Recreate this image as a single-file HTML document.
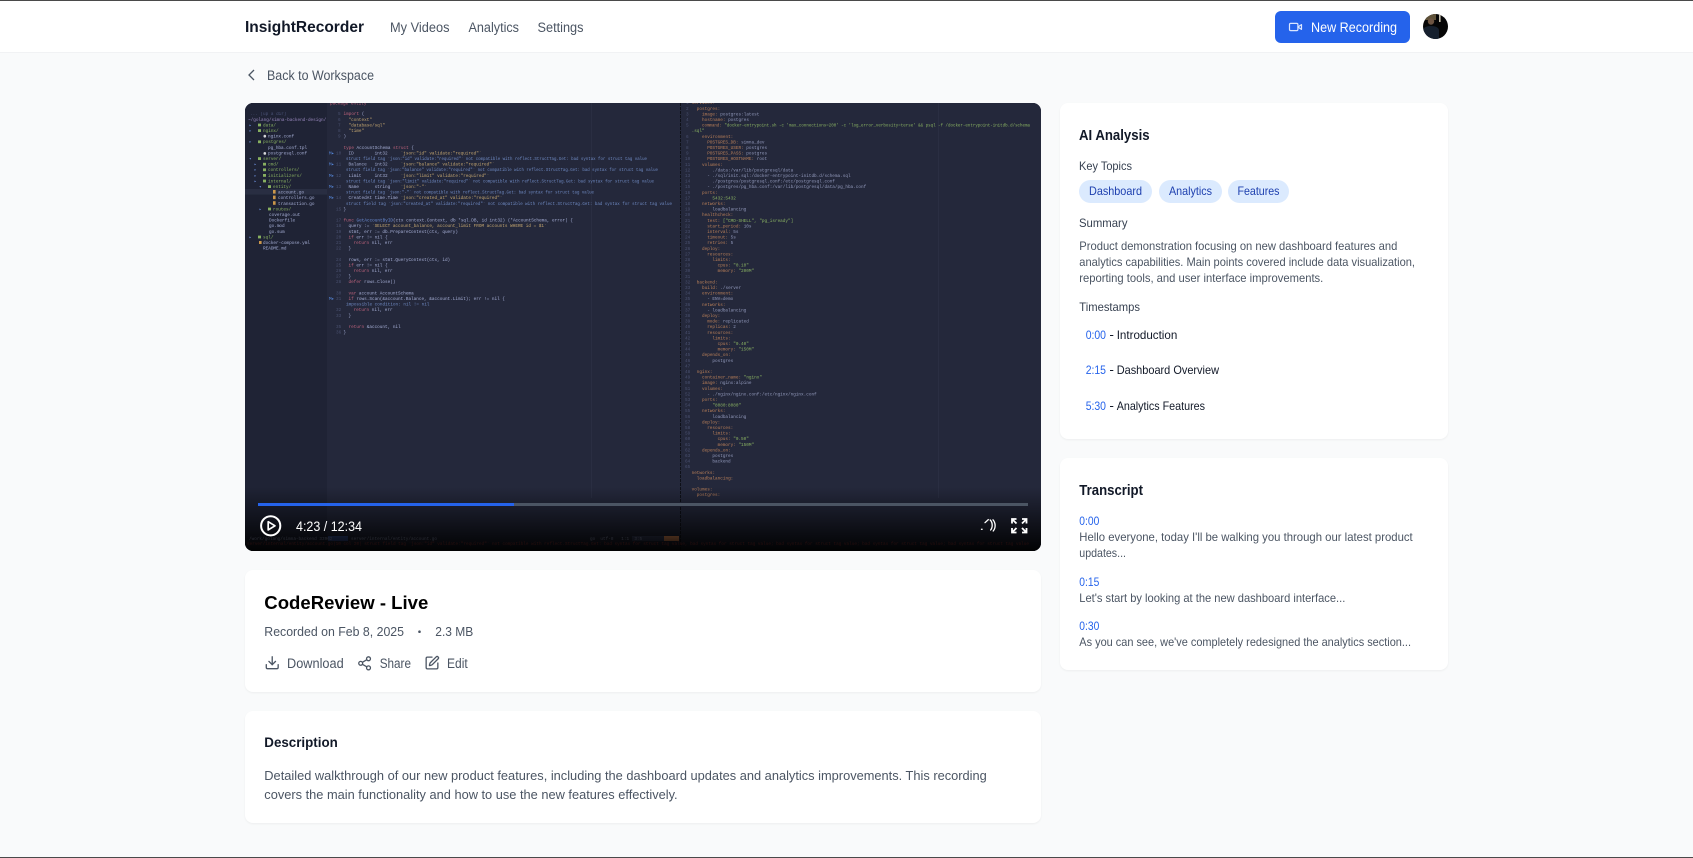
<!DOCTYPE html>
<html lang="en"><head><meta charset="utf-8"><title>CodeReview - Live</title>
<style>
html,body{margin:0;padding:0;width:1693px;height:858px;overflow:hidden;background:#f9fafb;font-family:"Liberation Sans",Arial,sans-serif}
.abs{position:absolute}
.nav{left:0;top:0;width:1693px;background:#fff;border-top:1px solid #4a4a4a;border-bottom:1px solid #f1f2f4;box-sizing:border-box;height:53px}
.bot{left:0;top:857px;width:1693px;height:1px;background:#4a4a4a}
.btn{left:1275px;top:11px;width:135px;height:32px;border-radius:6px;background:#2563eb}
.card{background:#fff;border-radius:8px;box-shadow:0 1px 2px rgba(0,0,0,.05)}
.video{left:245px;top:103px;width:796px;height:448px;border-radius:8px;overflow:hidden;background:#24283b}
.pill{top:180px;height:23px;border-radius:12px;background:#dbeafe}
svg{position:absolute;left:0;top:0;display:block}
.t text{font-family:"Liberation Sans",Arial,sans-serif}
.g{fill:#4b5563}.d{fill:#111827}.b{fill:#2563eb}.l{fill:#1e40af}.w{fill:#fff}
.code text{font-family:"Liberation Mono",monospace;font-size:4.35px;white-space:pre}
.ln{fill:#4a5170}.k{fill:#e0708a}.s{fill:#e5c07b}.f{fill:#c0caf5}.e{fill:#7f9fe0}.y{fill:#d9925f}.v{fill:#a9b1d6}.q{fill:#9ece6a}.tg{fill:#9ece6a}.fn{fill:#7aa2f7}
.dim{opacity:.82}
</style></head>
<body>
<div class="abs nav"></div>
<div class="abs bot"></div>
<div class="abs btn"></div>
<div class="abs video">
<svg width="796" height="448" viewBox="245 103 796 448" class="code">
<rect x="245" y="103" width="796" height="448" fill="#24283b"/>
<rect x="245" y="103" width="82" height="448" fill="#1f2335"/>
<rect x="245" y="189" width="82" height="5.6" fill="#292e42"/>
<rect x="591" y="103" width="1" height="395" fill="#2a2e42"/>
<rect x="938" y="103" width="1" height="395" fill="#2a2e42"/>
<line x1="680.5" y1="103" x2="680.5" y2="551" stroke="#0e1018" stroke-width="1" stroke-dasharray="3 1"/>
<!-- tree -->
<g class="dim">
<text x="250" y="115" fill="#565f89">... (up a dir)</text>
<text x="248" y="120.8" fill="#b39ddb">~/golang/simna-backend-design/</text>
<g fill="#9ece6a"><rect x="258" y="123.6" width="3" height="2.8"/><rect x="258" y="129.2" width="3" height="2.8"/><rect x="258" y="140.4" width="3" height="2.8"/><rect x="258" y="157.2" width="3" height="2.8"/><rect x="263" y="162.8" width="3" height="2.8"/><rect x="263" y="168.4" width="3" height="2.8"/><rect x="263" y="174" width="3" height="2.8"/><rect x="263" y="179.6" width="3" height="2.8"/><rect x="268" y="185.2" width="3" height="2.8"/><rect x="268" y="207.6" width="3" height="2.8"/><rect x="258" y="235.6" width="3" height="2.8"/></g>
<g fill="#7aa2f7"><text x="249" y="126.4">▸</text><text x="249" y="132">▸</text><text x="249" y="143.2">▸</text><text x="249" y="160">▾</text><text x="254" y="165.6">▸</text><text x="254" y="171.2">▸</text><text x="254" y="176.8">▸</text><text x="254" y="182.4">▸</text><text x="259" y="188">▾</text><text x="259" y="210.4">▸</text><text x="249" y="238.4">▸</text></g>
<g fill="#fff"><rect x="263.5" y="134.8" width="2.6" height="2.8" rx="1.3"/><rect x="263.5" y="152" width="2.6" height="2.8" rx="1.3"/></g>
<g fill="#f0b04f"><rect x="273" y="190" width="2.6" height="3.6"/><rect x="273" y="195.6" width="2.6" height="3.6"/><rect x="273" y="201.2" width="2.6" height="3.6"/><rect x="259" y="241" width="2.6" height="3"/></g>
<g fill="#9ece6a"><text x="263" y="126.4">data/</text><text x="263" y="132">nginx/</text><text x="263" y="143.2">postgres/</text><text x="263" y="160">server/</text><text x="268" y="165.6">cmd/</text><text x="268" y="171.2">controllers/</text><text x="268" y="176.8">initializers/</text><text x="268" y="182.4">internal/</text><text x="273" y="188">entity/</text><text x="273" y="210.4">routes/</text><text x="263" y="238.4">sql/</text></g>
<g fill="#c0caf5"><text x="268" y="137.6">nginx.conf</text><text x="268" y="148.8">pg_hba.conf.tpl</text><text x="268" y="154.4">postgresql.conf</text><text x="278" y="193.6">account.go</text><text x="278" y="199.2">controllers.go</text><text x="278" y="204.8">transaction.go</text><text x="269" y="216">coverage.out</text><text x="269" y="221.6">Dockerfile</text><text x="269" y="227.2">go.mod</text><text x="269" y="232.8">go.sum</text><text x="263" y="244">docker-compose.yml</text><text x="263" y="249.6">README.md</text></g>
</g>
<!-- go code -->
<g class="ln"><text x="338" y="115.2">5</text><text x="338" y="120.8">6</text><text x="338" y="126.4">7</text><text x="338" y="132">8</text><text x="338" y="137.6">9</text><text x="336" y="154.4">10</text><text x="336" y="165.6">11</text><text x="336" y="176.8">12</text><text x="336" y="188">13</text><text x="336" y="199.2">14</text><text x="336" y="210.4">15</text><text x="336" y="221.6">17</text><text x="336" y="227.2">18</text><text x="336" y="232.8">19</text><text x="336" y="238.4">20</text><text x="336" y="244">21</text><text x="336" y="249.6">22</text><text x="336" y="260.8">24</text><text x="336" y="266.4">25</text><text x="336" y="272">26</text><text x="336" y="277.6">27</text><text x="336" y="283.2">28</text><text x="336" y="294.4">30</text><text x="336" y="300">31</text><text x="336" y="311.2">32</text><text x="336" y="316.8">33</text><text x="336" y="328">35</text><text x="336" y="333.6">36</text></g>
<g fill="#5a8fe6"><text x="329" y="154.4">M▸</text><text x="329" y="165.6">M▸</text><text x="329" y="176.8">M▸</text><text x="329" y="188">M▸</text><text x="329" y="199.2">M▸</text><text x="329" y="300">M▸</text></g>
<g class="f dim">
<text x="330" y="104.5" class="k">package entity</text>
<text x="343.5" y="115.2"><tspan class="k">import</tspan> (</text>
<text x="348.5" y="120.8" class="s">"context"</text>
<text x="348.5" y="126.4" class="s">"database/sql"</text>
<text x="348.5" y="132" class="s">"time"</text>
<text x="343.5" y="137.6">)</text>
<text x="343.5" y="148.8"><tspan class="k">type</tspan> AccountSchema <tspan class="k">struct</tspan> {</text>
<text x="348.5" y="154.4">ID        int32     <tspan class="s">`json:"id" validate:"required"`</tspan></text>
<text x="346" y="160" class="e" textLength="301" lengthAdjust="spacingAndGlyphs">struct field tag `json:"id" validate:"required"` not compatible with reflect.StructTag.Get: bad syntax for struct tag value</text>
<text x="348.5" y="165.6">Balance   int32     <tspan class="s">`json:"balance" validate:"required"`</tspan></text>
<text x="346" y="171.2" class="e" textLength="312" lengthAdjust="spacingAndGlyphs">struct field tag `json:"balance" validate:"required"` not compatible with reflect.StructTag.Get: bad syntax for struct tag value</text>
<text x="348.5" y="176.8">Limit     int32     <tspan class="s">`json:"limit" validate:"required"`</tspan></text>
<text x="346" y="182.4" class="e" textLength="308" lengthAdjust="spacingAndGlyphs">struct field tag `json:"limit" validate:"required"` not compatible with reflect.StructTag.Get: bad syntax for struct tag value</text>
<text x="348.5" y="188">Name      string    <tspan class="s">`json:"-"`</tspan></text>
<text x="346" y="193.6" class="e" textLength="248" lengthAdjust="spacingAndGlyphs">struct field tag `json:"-"` not compatible with reflect.StructTag.Get: bad syntax for struct tag value</text>
<text x="348.5" y="199.2">CreatedAt time.Time <tspan class="s">`json:"created_at" validate:"required"`</tspan></text>
<text x="346" y="204.8" class="e" textLength="326" lengthAdjust="spacingAndGlyphs">struct field tag `json:"created_at" validate:"required"` not compatible with reflect.StructTag.Get: bad syntax for struct tag value</text>
<text x="343.5" y="210.4">}</text>
<text x="343.5" y="221.6"><tspan class="k">func</tspan> <tspan class="fn">GetAccountByID</tspan>(ctx context.Context, db *sql.DB, id int32) (*AccountSchema, error) {</text>
<text x="348.5" y="227.2">query := <tspan class="s">`SELECT account_balance, account_limit FROM accounts WHERE id = $1`</tspan></text>
<text x="348.5" y="232.8">stmt, err := db.PrepareContext(ctx, query)</text>
<text x="348.5" y="238.4"><tspan class="k">if</tspan> err != nil {</text>
<text x="353.5" y="244"><tspan class="k">return</tspan> nil, err</text>
<text x="348.5" y="249.6">}</text>
<text x="348.5" y="260.8">rows, err := stmt.QueryContext(ctx, id)</text>
<text x="348.5" y="266.4"><tspan class="k">if</tspan> err != nil {</text>
<text x="353.5" y="272"><tspan class="k">return</tspan> nil, err</text>
<text x="348.5" y="277.6">}</text>
<text x="348.5" y="283.2"><tspan class="k">defer</tspan> rows.Close()</text>
<text x="348.5" y="294.4"><tspan class="k">var</tspan> account AccountSchema</text>
<text x="348.5" y="300"><tspan class="k">if</tspan> rows.Scan(&amp;account.Balance, &amp;account.Limit); err != nil {</text>
<text x="346" y="305.6" class="e">impossible condition: nil != nil</text>
<text x="353.5" y="311.2"><tspan class="k">return</tspan> nil, err</text>
<text x="348.5" y="316.8">}</text>
<text x="348.5" y="328"><tspan class="k">return</tspan> &amp;account, nil</text>
<text x="343.5" y="333.6">}</text>
</g>
<!-- right numbers -->
<text class="ln" x="686" y="104.2">1<tspan x="686" dy="5.6">2</tspan><tspan x="686" dy="5.6">3</tspan><tspan x="686" dy="5.6">4</tspan><tspan x="686" dy="5.6">5</tspan><tspan x="686" dy="11.2">6</tspan><tspan x="686" dy="5.6">7</tspan><tspan x="686" dy="5.6">8</tspan><tspan x="686" dy="5.6">9</tspan><tspan x="685" dy="5.6">10</tspan><tspan x="685" dy="5.6">11</tspan><tspan x="685" dy="5.6">12</tspan><tspan x="685" dy="5.6">13</tspan><tspan x="685" dy="5.6">14</tspan><tspan x="685" dy="5.6">15</tspan><tspan x="685" dy="5.6">16</tspan><tspan x="685" dy="5.6">17</tspan><tspan x="685" dy="5.6">18</tspan><tspan x="685" dy="5.6">19</tspan><tspan x="685" dy="5.6">20</tspan><tspan x="685" dy="5.6">21</tspan><tspan x="685" dy="5.6">22</tspan><tspan x="685" dy="5.6">23</tspan><tspan x="685" dy="5.6">24</tspan><tspan x="685" dy="5.6">25</tspan><tspan x="685" dy="5.6">26</tspan><tspan x="685" dy="5.6">27</tspan><tspan x="685" dy="5.6">28</tspan><tspan x="685" dy="5.6">29</tspan><tspan x="685" dy="5.6">30</tspan><tspan x="685" dy="5.6">31</tspan><tspan x="685" dy="5.6">32</tspan><tspan x="685" dy="5.6">33</tspan><tspan x="685" dy="5.6">34</tspan><tspan x="685" dy="5.6">35</tspan><tspan x="685" dy="5.6">36</tspan><tspan x="685" dy="5.6">37</tspan><tspan x="685" dy="5.6">38</tspan><tspan x="685" dy="5.6">39</tspan><tspan x="685" dy="5.6">40</tspan><tspan x="685" dy="5.6">41</tspan><tspan x="685" dy="5.6">42</tspan><tspan x="685" dy="5.6">43</tspan><tspan x="685" dy="5.6">44</tspan><tspan x="685" dy="5.6">45</tspan><tspan x="685" dy="5.6">46</tspan><tspan x="685" dy="5.6">47</tspan><tspan x="685" dy="5.6">48</tspan><tspan x="685" dy="5.6">49</tspan><tspan x="685" dy="5.6">50</tspan><tspan x="685" dy="5.6">51</tspan><tspan x="685" dy="5.6">52</tspan><tspan x="685" dy="5.6">53</tspan><tspan x="685" dy="5.6">54</tspan><tspan x="685" dy="5.6">55</tspan><tspan x="685" dy="5.6">56</tspan><tspan x="685" dy="5.6">57</tspan><tspan x="685" dy="5.6">58</tspan><tspan x="685" dy="5.6">59</tspan><tspan x="685" dy="5.6">60</tspan><tspan x="685" dy="5.6">61</tspan><tspan x="685" dy="5.6">62</tspan><tspan x="685" dy="5.6">63</tspan><tspan x="685" dy="5.6">64</tspan><tspan x="685" dy="5.6">65</tspan></text>
<!-- yaml -->
<g class="y dim">
<text x="691.6" y="104.2">services:</text>
<text x="696.8" y="109.8">postgres:</text>
<text x="702" y="115.4">image: <tspan class="v">postgres:latest</tspan></text>
<text x="702" y="121">hostname: <tspan class="v">postgres</tspan></text>
<text x="702" y="126.6" textLength="328" lengthAdjust="spacingAndGlyphs">command: <tspan class="q">"docker-entrypoint.sh -c 'max_connections=200' -c 'log_error_verbosity=terse' &amp;&amp; psql -f /docker-entrypoint-initdb.d/schema</tspan></text>
<text x="691.6" y="132.2" class="q">.sql"</text>
<text x="702" y="137.8">environment:</text>
<text x="707.2" y="143.4">POSTGRES_DB: <tspan class="v">simna_dev</tspan></text>
<text x="707.2" y="149">POSTGRES_USER: <tspan class="v">postgres</tspan></text>
<text x="707.2" y="154.6">POSTGRES_PASS: <tspan class="v">postgres</tspan></text>
<text x="707.2" y="160.2">POSTGRES_HOSTNAME: <tspan class="v">root</tspan></text>
<text x="702" y="165.8">volumes:</text>
<text x="707.2" y="171.4" class="v">  ./data:/var/lib/postgresql/data</text>
<text x="707.2" y="177" class="v">- ./sql/init.sql:/docker-entrypoint-initdb.d/schema.sql</text>
<text x="707.2" y="182.6" class="v">  ./postgres/postgresql.conf:/etc/postgresql.conf</text>
<text x="707.2" y="188.2" class="v">- ./postgres/pg_hba.conf:/var/lib/postgresql/data/pg_hba.conf</text>
<text x="702" y="193.8">ports:</text>
<text x="712.4" y="199.4" class="q">5432:5432</text>
<text x="702" y="205">networks:</text>
<text x="712.4" y="210.6" class="v">loadbalancing</text>
<text x="702" y="216.2">healthcheck:</text>
<text x="707.2" y="221.8">test: <tspan class="q">["CMD-SHELL", "pg_isready"]</tspan></text>
<text x="707.2" y="227.4">start_period: <tspan class="v">10s</tspan></text>
<text x="707.2" y="233">interval: <tspan class="v">5s</tspan></text>
<text x="707.2" y="238.6">timeout: <tspan class="v">5s</tspan></text>
<text x="707.2" y="244.2">retries: <tspan class="v">5</tspan></text>
<text x="702" y="249.8">deploy:</text>
<text x="707.2" y="255.4">resources:</text>
<text x="712.4" y="261">limits:</text>
<text x="717.6" y="266.6">cpus: <tspan class="q">"0.10"</tspan></text>
<text x="717.6" y="272.2">memory: <tspan class="q">"200M"</tspan></text>
<text x="696.8" y="283.4">backend:</text>
<text x="702" y="289">build: <tspan class="v">./server</tspan></text>
<text x="702" y="294.6">environment:</text>
<text x="707.2" y="300.2" class="v">- ENV=demo</text>
<text x="702" y="305.8">networks:</text>
<text x="707.2" y="311.4" class="v">- loadbalancing</text>
<text x="702" y="317">deploy:</text>
<text x="707.2" y="322.6">mode: <tspan class="v">replicated</tspan></text>
<text x="707.2" y="328.2">replicas: <tspan class="v">2</tspan></text>
<text x="707.2" y="333.8">resources:</text>
<text x="712.4" y="339.4">limits:</text>
<text x="717.6" y="345">cpus: <tspan class="q">"0.40"</tspan></text>
<text x="717.6" y="350.6">memory: <tspan class="q">"150M"</tspan></text>
<text x="702" y="356.2">depends_on:</text>
<text x="712.4" y="361.8" class="v">postgres</text>
<text x="696.8" y="373">nginx:</text>
<text x="702" y="378.6">container_name: <tspan class="q">"nginx"</tspan></text>
<text x="702" y="384.2">image: <tspan class="v">nginx:alpine</tspan></text>
<text x="702" y="389.8">volumes:</text>
<text x="707.2" y="395.4" class="v">- ./nginx/nginx.conf:/etc/nginx/nginx.conf</text>
<text x="702" y="401">ports:</text>
<text x="712.4" y="406.6" class="q">"8080:8080"</text>
<text x="702" y="412.2">networks:</text>
<text x="712.4" y="417.8" class="v">loadbalancing</text>
<text x="702" y="423.4">deploy:</text>
<text x="707.2" y="429">resources:</text>
<text x="712.4" y="434.6">limits:</text>
<text x="717.6" y="440.2">cpus: <tspan class="q">"0.50"</tspan></text>
<text x="717.6" y="445.8">memory: <tspan class="q">"150M"</tspan></text>
<text x="702" y="451.4">depends_on:</text>
<text x="712.4" y="457" class="v">postgres</text>
<text x="712.4" y="462.6" class="v">backend</text>
<text x="691.6" y="473.8">networks:</text>
<text x="696.8" y="479.4">loadbalancing:</text>
<text x="691.6" y="490.6">volumes:</text>
<text x="696.8" y="496.2">postgres:</text>
</g>
<!-- status bar -->
<rect x="328" y="536" width="20" height="5" fill="#3d59a1"/>
<rect x="632" y="536" width="32" height="5" fill="#3b4261"/>
<rect x="664" y="536" width="15" height="5" fill="#ff9e64"/>
<text x="249" y="540" fill="#a9b1d6">/work/golang/simna-backend 33962</text>
<text x="351" y="540" fill="#a9b1d6">server/internal/entity/account.go</text>
<text x="590" y="540" fill="#a9b1d6">go  utf-8   1:1  3:5</text>
<text x="247" y="545" fill="#e05050">server/internal/entity/account.go|10 col 20| struct field tag `json:"id" validate:"required"` not compatible with reflect.StructTag.Get: bad syntax for struct tag value, bad syntax for struct tag value; bad syntax for struct tag value; bad syntax for struct tag value; bad syntax for struct tag value</text>
</svg>
<div class="abs" style="left:0;top:384px;width:796px;height:64px;background:linear-gradient(to top,rgba(0,0,0,.95),rgba(0,0,0,0))"></div>
<div class="abs" style="left:13px;top:400px;width:770px;height:3px;background:#4b5563"><div style="width:256px;height:3px;background:#2563eb"></div></div>
</div>
<div class="abs card" style="left:245px;top:570px;width:796px;height:122px"></div>
<div class="abs card" style="left:245px;top:711px;width:796px;height:112px"></div>
<div class="abs card" style="left:1060px;top:103px;width:388px;height:336px"></div>
<div class="abs card" style="left:1060px;top:458px;width:388px;height:212px"></div>
<div class="abs pill" style="left:1079px;width:73px"></div>
<div class="abs pill" style="left:1159px;width:63px"></div>
<div class="abs pill" style="left:1228px;width:61px"></div>

<svg class="t" width="1693" height="858" viewBox="0 0 1693 858">
<text x="245" y="32" font-size="15.5" font-weight="700" class="d" textLength="119" lengthAdjust="spacingAndGlyphs">InsightRecorder</text>
<text x="390" y="32" font-size="13.5" class="g" textLength="59.5" lengthAdjust="spacingAndGlyphs">My Videos</text>
<text x="468.5" y="32" font-size="13.5" class="g" textLength="50.5" lengthAdjust="spacingAndGlyphs">Analytics</text>
<text x="537.5" y="32" font-size="13.5" class="g" textLength="46" lengthAdjust="spacingAndGlyphs">Settings</text>
<text x="1311" y="32" font-size="13.5" class="w" textLength="86" lengthAdjust="spacingAndGlyphs">New Recording</text>
<text x="267" y="80" font-size="13.5" class="g" textLength="107" lengthAdjust="spacingAndGlyphs">Back to Workspace</text>
<text x="296" y="531" font-size="13.5" class="w" textLength="66" lengthAdjust="spacingAndGlyphs">4:23 / 12:34</text>
<text x="264.3" y="609" font-size="18.5" font-weight="700" fill="#000" textLength="164" lengthAdjust="spacingAndGlyphs">CodeReview - Live</text>
<text x="264.3" y="636" font-size="13" class="g" textLength="139.7" lengthAdjust="spacingAndGlyphs">Recorded on Feb 8, 2025</text>
<circle cx="419.5" cy="631.7" r="1.3" fill="#4b5563"/>
<text x="435.3" y="636" font-size="13" class="g" textLength="38" lengthAdjust="spacingAndGlyphs">2.3 MB</text>
<text x="287" y="668" font-size="13.5" class="g" textLength="56.7" lengthAdjust="spacingAndGlyphs">Download</text>
<text x="379.7" y="668" font-size="13.5" class="g" textLength="31.3" lengthAdjust="spacingAndGlyphs">Share</text>
<text x="447" y="668" font-size="13.5" class="g" textLength="20.7" lengthAdjust="spacingAndGlyphs">Edit</text>
<text x="264.3" y="747" font-size="13.5" font-weight="700" class="d" textLength="73.5" lengthAdjust="spacingAndGlyphs">Description</text>
<text x="264.3" y="780" font-size="13" class="g" textLength="722.5" lengthAdjust="spacingAndGlyphs">Detailed walkthrough of our new product features, including the dashboard updates and analytics improvements. This recording</text>
<text x="264.3" y="799" font-size="13" class="g" textLength="413.3" lengthAdjust="spacingAndGlyphs">covers the main functionality and how to use the new features effectively.</text>

<text x="1079" y="140" font-size="14.5" font-weight="700" class="d" textLength="70.6" lengthAdjust="spacingAndGlyphs">AI Analysis</text>
<text x="1079" y="170" font-size="12" fill="#374151" textLength="53" lengthAdjust="spacingAndGlyphs">Key Topics</text>
<text x="1089" y="195" font-size="12" class="l" textLength="53" lengthAdjust="spacingAndGlyphs">Dashboard</text>
<text x="1169" y="195" font-size="12" class="l" textLength="43" lengthAdjust="spacingAndGlyphs">Analytics</text>
<text x="1237.5" y="195" font-size="12" class="l" textLength="42" lengthAdjust="spacingAndGlyphs">Features</text>
<text x="1079" y="227" font-size="12" fill="#374151" textLength="48.5" lengthAdjust="spacingAndGlyphs">Summary</text>
<text x="1079.3" y="250" font-size="12" class="g" textLength="318" lengthAdjust="spacingAndGlyphs">Product demonstration focusing on new dashboard features and</text>
<text x="1079.3" y="266" font-size="12" class="g" textLength="335.7" lengthAdjust="spacingAndGlyphs">analytics capabilities. Main points covered include data visualization,</text>
<text x="1079.3" y="282" font-size="12" class="g" textLength="244" lengthAdjust="spacingAndGlyphs">reporting tools, and user interface improvements.</text>
<text x="1079.3" y="311" font-size="12" fill="#374151" textLength="60.7" lengthAdjust="spacingAndGlyphs">Timestamps</text>
<text x="1085.7" y="339" font-size="12" class="b" textLength="20.3" lengthAdjust="spacingAndGlyphs">0:00</text><rect x="1110" y="335" width="3.3" height="1" fill="#111827"/>
<text x="1116.7" y="339" font-size="12" class="d" textLength="60.6" lengthAdjust="spacingAndGlyphs">Introduction</text>
<text x="1085.7" y="374" font-size="12" class="b" textLength="20.3" lengthAdjust="spacingAndGlyphs">2:15</text><rect x="1110" y="370" width="3.3" height="1" fill="#111827"/>
<text x="1116.7" y="374" font-size="12" class="d" textLength="102.3" lengthAdjust="spacingAndGlyphs">Dashboard Overview</text>
<text x="1085.7" y="410" font-size="12" class="b" textLength="20.3" lengthAdjust="spacingAndGlyphs">5:30</text><rect x="1110" y="406" width="3.3" height="1" fill="#111827"/>
<text x="1116.7" y="410" font-size="12" class="d" textLength="88.3" lengthAdjust="spacingAndGlyphs">Analytics Features</text>
<text x="1079.3" y="495" font-size="14.5" font-weight="700" class="d" textLength="63.7" lengthAdjust="spacingAndGlyphs">Transcript</text>
<text x="1079.3" y="525" font-size="12" class="b" textLength="20" lengthAdjust="spacingAndGlyphs">0:00</text>
<text x="1079.3" y="541" font-size="12" class="g" textLength="333.4" lengthAdjust="spacingAndGlyphs">Hello everyone, today I'll be walking you through our latest product</text>
<text x="1079.3" y="557" font-size="12" class="g" textLength="46.7" lengthAdjust="spacingAndGlyphs">updates...</text>
<text x="1079.3" y="586" font-size="12" class="b" textLength="20" lengthAdjust="spacingAndGlyphs">0:15</text>
<text x="1079.3" y="602" font-size="12" class="g" textLength="266" lengthAdjust="spacingAndGlyphs">Let's start by looking at the new dashboard interface...</text>
<text x="1079.3" y="630" font-size="12" class="b" textLength="20" lengthAdjust="spacingAndGlyphs">0:30</text>
<text x="1079.3" y="646" font-size="12" class="g" textLength="331.7" lengthAdjust="spacingAndGlyphs">As you can see, we've completely redesigned the analytics section...</text>
<!-- icons -->
<polyline points="254,70 249,75 254,80" fill="none" stroke="#4b5563" stroke-width="1.3"/>
<g transform="translate(1288.3,19.8) scale(.6)" fill="none" stroke="#dbe6ff" stroke-width="2" stroke-linejoin="round"><rect x="2" y="6" width="14" height="12" rx="2"/><path d="m22 8-6 4 6 4V8Z"/></g>
<circle cx="270.7" cy="525.8" r="9.6" fill="none" stroke="#fff" stroke-width="2"/>
<path d="M268.2 521.7L275 525.8L268.2 529.9Z" fill="none" stroke="#fff" stroke-width="1.7" stroke-linejoin="round"/>
<g fill="none" stroke="#fff" stroke-linecap="round" stroke-width="1.3"><path d="M981.5 529.3h.6"/><path d="M985 522.7L988.3 519.6"/><path d="M990.2 520C992.8 522.5 992.8 527.5 990.6 530"/><path d="M993 519.8C995.8 523 995.8 528 993.2 531"/></g>
<g fill="none" stroke="#fff" stroke-width="1.8"><path d="M1012 523.5v-4.5h4.5M1012.5 519.5l4 4"/><path d="M1026.5 523.5v-4.5h-4.5M1026 519.5l-4 4"/><path d="M1012 528v4.5h4.5M1012.5 532l4-4"/><path d="M1026.5 528v4.5h-4.5M1026 532l-4-4"/></g>
<g transform="translate(264.3,654.8) scale(.66)" fill="none" stroke="#4b5563" stroke-width="2" stroke-linecap="round" stroke-linejoin="round"><path d="M21 15v4a2 2 0 0 1-2 2H5a2 2 0 0 1-2-2v-4"/><path d="M7 10l5 5 5-5"/><path d="M12 15V3"/></g>
<g transform="translate(356.8,655.5) scale(.65)" fill="none" stroke="#4b5563" stroke-width="2" stroke-linecap="round" stroke-linejoin="round"><circle cx="18" cy="5" r="3"/><circle cx="6" cy="12" r="3"/><circle cx="18" cy="19" r="3"/><path d="M8.59 13.51L15.42 17.49"/><path d="M15.41 6.51L8.59 10.49"/></g>
<g transform="translate(424.2,655.2) scale(.65)" fill="none" stroke="#4b5563" stroke-width="2" stroke-linecap="round" stroke-linejoin="round"><path d="M12 3H5a2 2 0 0 0-2 2v14a2 2 0 0 0 2 2h14a2 2 0 0 0 2-2v-7"/><path d="M18.375 2.625a1 1 0 0 1 3 3l-9.013 9.014a2 2 0 0 1-.853.505l-2.873.84a.5.5 0 0 1-.62-.62l.84-2.873a2 2 0 0 1 .506-.852z"/></g>
<!-- avatar -->
<defs><clipPath id="av"><circle cx="1435.5" cy="26.5" r="12.5"/></clipPath></defs>
<g clip-path="url(#av)"><rect x="1423" y="14" width="25" height="25" fill="#060607"/><rect x="1425" y="14" width="11" height="6" fill="#5e5138"/><rect x="1439" y="14" width="1.6" height="8" fill="#c9c2b0"/><path d="M1423 39V30q1-4 8-4t8 4v9z" fill="#16202e"/><circle cx="1431" cy="21.5" r="3.2" fill="#6e5543"/></g>
</svg>
</body></html>
